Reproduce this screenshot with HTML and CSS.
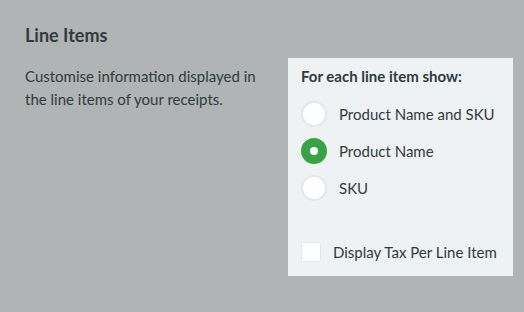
FILE: index.html
```html
<!DOCTYPE html>
<html lang="en">

<head>
  <meta charset="UTF-8" />
  <meta name="viewport" content="width=device-width, initial-scale=1.0" />
  <title>Line Items</title>
  <link rel="stylesheet" href="styles.css">
</head>

<body>
  <div class="settings-row">
    <div class="intro">
      <h2>Line Items</h2>
      <p>Customise information displayed in the line items of your receipts.</p>
    </div>

    <div class="options">
      <h3>For each line item show:</h3>

      <label class="radio-row">
        <input type="radio" name="show" value="both" />
        <span class="radio"></span>
        Product Name and SKU
      </label>
      <label class="radio-row">
        <input type="radio" name="show" value="name" checked />
        <span class="radio"></span>
        Product Name
      </label>
      <label class="radio-row">
        <input type="radio" name="show" value="sku" />
        <span class="radio"></span>
        SKU
      </label>

      <label class="check-row">
        <input type="checkbox" />
        <span class="check"></span>
        Display Tax Per Line Item
      </label>
    </div>
  </div>
</body>

</html>
```

FILE: styles.css
```css
body {
  margin: 0;
  background: #b0b4b4;
  font-family: Lato, "Open Sans", sans-serif;
  color: #323a40;
}

.settings-row {
  display: flex;
  padding: 24px 11px 0 25px;
}

.intro {
  width: 263px;
}

.intro h2 {
  margin: 0;
  font-size: 18px;
  font-weight: bold;
  line-height: 22px;
}

.intro p {
  margin: 19px 0 0;
  font-size: 15px;
  line-height: 23px;
  width: 240px;
}

.options {
  margin-top: 34px;
  width: 225px;
  background: #eef2f3;
  padding: 9px 0 14px 13px;
  box-sizing: border-box;
}

.options h3 {
  margin: 0 0 10px;
  font-size: 15px;
  font-weight: bold;
  line-height: 18px;
}

.radio-row,
.check-row {
  display: flex;
  align-items: center;
  font-size: 15px;
  cursor: pointer;
}

.radio-row {
  height: 37px;
}

.check-row {
  margin-top: 36px;
  height: 20px;
}

.radio-row input,
.check-row input {
  display: none;
}

.radio {
  width: 22px;
  height: 22px;
  border: 2px solid #e2e7ea;
  border-radius: 50%;
  background: white;
  margin-right: 12px;
  flex-shrink: 0;
}

.radio-row input:checked + .radio {
  width: 8px;
  height: 8px;
  border: 9px solid #39a146;
}

.check {
  width: 18px;
  height: 18px;
  border: 1px solid #e2e7ea;
  border-radius: 2px;
  background: white;
  margin-right: 12px;
  flex-shrink: 0;
}
```
